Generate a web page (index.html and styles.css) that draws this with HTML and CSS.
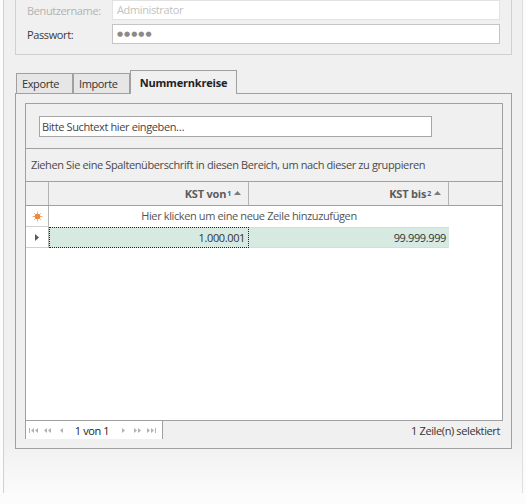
FILE: index.html
```html
<!DOCTYPE html>
<html lang="de">
<head>
<meta charset="utf-8">
<title>Einstellungen</title>
<link rel="stylesheet" href="styles.css">
</head>
<body>
<div class="window">
  <div class="login-group">
    <div class="field-row disabled">
      <span class="field-label">Benutzername:</span>
      <div class="field-input">Administrator</div>
    </div>
    <div class="field-row">
      <span class="field-label">Passwort:</span>
      <div class="field-input password">●●●●●</div>
    </div>
  </div>

  <div class="tabs">
    <div class="tab-strip">
      <div class="tab tab-exporte">Exporte</div>
      <div class="tab tab-importe">Importe</div>
      <div class="tab active">Nummernkreise</div>
    </div>
    <div class="tab-pane">
      <div class="grid">
        <div class="search-panel">
          <div class="search-box">Bitte Suchtext hier eingeben…</div>
        </div>
        <div class="group-panel">Ziehen Sie eine Spaltenüberschrift in diesen Bereich, um nach dieser zu gruppieren</div>
        <div class="grid-header">
          <div class="head-indicator"></div>
          <div class="col-head">KST von<sup class="sort-index">1</sup>
            <svg class="sort-glyph" width="7" height="4" viewBox="0 0 7 4"><polygon points="0,4 3.5,0 7,4" fill="#7a7a7a"/></svg>
          </div>
          <div class="col-head">KST bis<sup class="sort-index">2</sup>
            <svg class="sort-glyph" width="7" height="4" viewBox="0 0 7 4"><polygon points="0,4 3.5,0 7,4" fill="#7a7a7a"/></svg>
          </div>
          <div class="head-filler"></div>
        </div>
        <div class="grid-body">
          <div class="grid-row new-row">
            <div class="row-indicator">
              <svg width="11" height="11" viewBox="0 0 11 11">
                <g stroke="#f7b27a" stroke-width="1">
                  <line x1="5.5" y1="0.5" x2="5.5" y2="10.5"/>
                  <line x1="0.5" y1="5.5" x2="10.5" y2="5.5"/>
                  <line x1="2" y1="2" x2="9" y2="9"/>
                  <line x1="9" y1="2" x2="2" y2="9"/>
                </g>
                <circle cx="5.5" cy="5.5" r="2.8" fill="#f08a3a"/>
              </svg>
            </div>
            <div class="new-row-text">Hier klicken um eine neue Zeile hinzuzufügen</div>
          </div>
          <div class="grid-row data-row">
            <div class="row-indicator">
              <svg width="4" height="7" viewBox="0 0 4 7"><polygon points="0,0 4,3.5 0,7" fill="#5a5a5a"/></svg>
            </div>
            <div class="cell focused">1.000.001</div>
            <div class="cell">99.999.999</div>
          </div>
        </div>
      </div>
      <div class="grid-footer">
        <div class="pager">
          <span class="pager-btn">
            <svg width="9" height="5" viewBox="0 0 9 5"><g fill="#b2b2b2"><rect x="0" y="0" width="1" height="5"/><polygon points="5,0 2,2.5 5,5"/><polygon points="9,0 6,2.5 9,5"/></g></svg>
          </span>
          <span class="pager-btn">
            <svg width="7" height="5" viewBox="0 0 7 5"><g fill="#b2b2b2"><polygon points="3,0 0,2.5 3,5"/><polygon points="7,0 4,2.5 7,5"/></g></svg>
          </span>
          <span class="pager-btn">
            <svg width="3" height="5" viewBox="0 0 3 5"><polygon points="3,0 0,2.5 3,5" fill="#b2b2b2"/></svg>
          </span>
          <span class="pager-text">1 von 1</span>
          <span class="pager-btn">
            <svg width="3" height="5" viewBox="0 0 3 5"><polygon points="0,0 3,2.5 0,5" fill="#b2b2b2"/></svg>
          </span>
          <span class="pager-btn">
            <svg width="7" height="5" viewBox="0 0 7 5"><g fill="#b2b2b2"><polygon points="0,0 3,2.5 0,5"/><polygon points="4,0 7,2.5 4,5"/></g></svg>
          </span>
          <span class="pager-btn">
            <svg width="9" height="5" viewBox="0 0 9 5"><g fill="#b2b2b2"><polygon points="0,0 3,2.5 0,5"/><polygon points="4,0 7,2.5 4,5"/><rect x="8" y="0" width="1" height="5"/></g></svg>
          </span>
        </div>
        <div class="selection-info">1 Zeile(n) selektiert</div>
      </div>
    </div>
  </div>
</div>
</body>
</html>
```

FILE: styles.css
```css
* {
  box-sizing: border-box;
}

html,
body {
  margin: 0;
  padding: 0;
}

body {
  width: 526px;
  height: 504px;
  overflow: hidden;
  background: #fcfcfc;
  font-family: "Open Sans", "Noto Sans", sans-serif;
  font-size: 11px;
  letter-spacing: -0.38px;
  color: #3a3a3a;
}

/* dialog surface, fading out towards the bottom */
.window {
  margin-left: 3px;
  width: 520px;
  height: 504px;
  padding: 0 10px 0 11px;
  border-left: 1px solid #d2d2d2;
  border-right: 1px solid #dedede;
  background: linear-gradient(to bottom, #f0f0f0 0, #f0f0f0 452px, #fbfbfb 504px);
}

/* login group box */
.login-group {
  margin-top: -11px;
  padding: 10px 11px;
  border: 1px solid #d0d0d0;
  display: flex;
  flex-direction: column;
  gap: 4px;
}

.field-row {
  display: flex;
  align-items: center;
  height: 20px;
}

.field-label {
  width: 85px;
  color: #3a3a3a;
}

.field-input {
  flex: 1;
  height: 20px;
  padding-left: 4px;
  line-height: 18px;
  background: #fff;
  border: 1px solid #c4c4c4;
  color: #3a3a3a;
}

.disabled .field-label {
  color: #b2b2b2;
}

.disabled .field-input {
  color: #c2c2c2;
  border-color: #e2e2e2;
}

.field-input.password {
  font-family: "DejaVu Sans", sans-serif;
  font-size: 7px;
  letter-spacing: 1px;
  color: #8a8a8a;
  line-height: 18px;
}

/* tabs */
.tabs {
  margin-top: 15px;
}

.tab-strip {
  display: flex;
  align-items: flex-end;
  height: 23px;
  padding-left: 1px;
}

.tab {
  height: 20px;
  padding-left: 5px;
  line-height: 19px;
  border: 1px solid #a0a0a0;
  border-bottom: none;
  background: #e6e6e6;
  color: #333;
}

.tab-exporte,
.tab-importe {
  width: 57px;
}

.tab.active {
  position: relative;
  z-index: 1;
  width: 107px;
  height: 24px;
  margin-bottom: -1px;
  padding: 0;
  line-height: 23px;
  text-align: center;
  font-weight: bold;
  letter-spacing: -0.2px;
  background: #f0f0f0;
  color: #222;
}

.tab-pane {
  height: 356px;
  padding: 9px 8px 9px 9px;
  border: 1px solid #a0a0a0;
}

/* grid control */
.grid {
  height: 318px;
  border: 1px solid #a0a0a0;
  background: #f0f0f0;
  display: flex;
  flex-direction: column;
}

.search-panel {
  padding: 12px 0 11px 13px;
  border-bottom: 1px solid #a0a0a0;
}

.search-box {
  width: 393px;
  height: 21px;
  padding-left: 2px;
  line-height: 19px;
  background: #fff;
  border: 1px solid #a6a6a6;
  color: #444;
}

.group-panel {
  height: 33px;
  padding-left: 5px;
  line-height: 32px;
  border-bottom: 1px solid #a0a0a0;
  color: #4a4a4a;
}

.grid-header {
  display: flex;
  height: 24px;
  border-bottom: 1px solid #a0a0a0;
  background: #f0f0f0;
}

.head-indicator {
  width: 23px;
  border-right: 1px solid #b4b4b4;
}

.col-head {
  width: 200px;
  padding-right: 7px;
  border-right: 1px solid #b4b4b4;
  display: flex;
  align-items: center;
  justify-content: flex-end;
  font-weight: bold;
  letter-spacing: -0.2px;
  color: #5c5c5c;
}

.sort-index {
  font-size: 7px;
  color: #3b5f8f;
  vertical-align: 3px;
  line-height: 0;
  margin-left: 1px;
}

.sort-glyph {
  margin-left: 3px;
  margin-bottom: 1px;
}

.head-filler {
  flex: 1;
}

.grid-body {
  flex: 1;
  background: #fff;
}

.grid-row {
  display: flex;
  height: 21px;
}

.row-indicator {
  width: 23px;
  border-right: 1px solid #b4b4b4;
  border-bottom: 1px solid #d0d0d0;
  display: flex;
  align-items: center;
  justify-content: center;
}

.new-row-text {
  width: 400px;
  text-align: center;
  line-height: 20px;
  color: #555;
}

.cell {
  width: 200px;
  padding-right: 3px;
  text-align: right;
  line-height: 19px;
  background: #d6eae2;
  border-top: 1px solid #cfe0d9;
  border-bottom: 1px solid #cfe0d9;
  color: #333;
}

.cell.focused {
  border: 1px dotted #222;
}

/* footer under the grid */
.grid-footer {
  display: flex;
  align-items: center;
  justify-content: space-between;
  height: 18px;
}

.pager {
  display: flex;
  align-items: center;
  width: 138px;
  height: 18px;
  padding-right: 4px;
  background: #fff;
  border-left: 1px solid #a0a0a0;
  border-right: 1px solid #a0a0a0;
}

.pager-btn {
  width: 14px;
  display: flex;
  align-items: center;
  justify-content: center;
}

.pager-text {
  width: 48px;
  text-align: center;
  color: #222;
}

.selection-info {
  padding-right: 3px;
  color: #333;
}
```
